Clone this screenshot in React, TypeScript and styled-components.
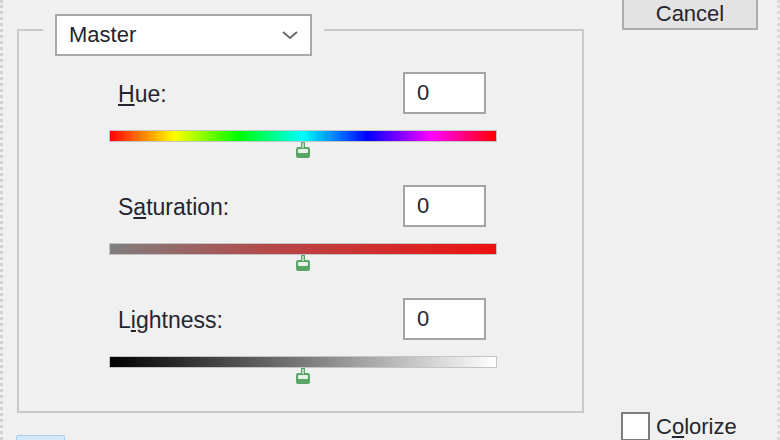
import styled, { createGlobalStyle } from "styled-components";

const GlobalStyle = createGlobalStyle`
  html, body {
    margin: 0;
    padding: 0;
    background: #f0f0f0;
    overflow: hidden;
  }
  body {
    font-family: "Liberation Sans", Arial, sans-serif;
  }
`;

const Frame = styled.div`
  width: 780px;
  height: 440px;
  box-sizing: border-box;
  display: flex;
  background: #f0f0f0;
  border-left: 3px dotted #d2d2d2;
  border-right: 3px dotted #dadada;
  overflow: hidden;
  color: #25252f;
`;

const LeftColumn = styled.div`
  display: flex;
  flex-direction: column;
  flex-shrink: 0;
`;

const GroupBox = styled.div`
  flex-shrink: 0;
  margin-top: 29px;
  margin-left: 14px;
  width: 567px;
  height: 384px;
  box-sizing: border-box;
  border: 2px solid #c9c9c9;
  display: flex;
  flex-direction: column;
`;

const LegendWrap = styled.div`
  align-self: flex-start;
  margin-top: -17px;
  margin-left: 24px;
  padding: 0 12px;
  background: #f0f0f0;
`;

const Dropdown = styled.div`
  width: 257px;
  height: 42px;
  box-sizing: border-box;
  border: 2px solid #a9a9a9;
  background: #fff;
  display: flex;
  align-items: center;
  justify-content: space-between;
  padding: 0 12px 0 12px;
  font-size: 22px;
`;

const Controls = styled.div`
  margin-left: 90px;
  margin-top: 16px;
  width: 388px;
  display: flex;
  flex-direction: column;
  gap: 26px;
`;

const Section = styled.div`
  display: flex;
  flex-direction: column;
`;

const Header = styled.div`
  height: 42px;
  display: flex;
  align-items: center;
  justify-content: space-between;
`;

const Label = styled.span`
  padding-left: 9px;
  font-size: 23px;
  margin-top: 3px;
`;

const ValueBox = styled.div`
  width: 83px;
  height: 42px;
  margin-right: 11px;
  box-sizing: border-box;
  border: 2px solid #a4a4a4;
  background: #fff;
  display: flex;
  align-items: center;
  padding-left: 12px;
  font-size: 22px;
`;

const Bar = styled.div<{ $fill: string }>`
  margin-top: 16px;
  height: 12px;
  box-sizing: border-box;
  border: 1px solid #c4c4c4;
  background: ${(p) => p.$fill};
`;

const ThumbTrack = styled.div`
  position: relative;
  height: 17px;
`;

const ThumbIcon = styled.svg<{ $pos: number }>`
  position: absolute;
  top: 0;
  left: ${(p) => p.$pos}%;
  transform: translateX(-50%);
`;

const HelpStub = styled.div`
  flex-shrink: 0;
  margin-top: 22px;
  margin-left: 13px;
  width: 49px;
  height: 12px;
  box-sizing: border-box;
  background: #d3e8f8;
  border: 1px solid #a6cfee;
  border-radius: 2px;
`;

const RightColumn = styled.div`
  margin-left: 38px;
  width: 136px;
  height: 440px;
  display: flex;
  flex-direction: column;
  justify-content: space-between;
`;

const Button = styled.div`
  margin-top: -10px;
  height: 40px;
  box-sizing: border-box;
  border: 2px solid #adadad;
  background: #e3e3e3;
  display: flex;
  align-items: flex-end;
  justify-content: center;
  padding-bottom: 1px;
  font-size: 22px;
`;

const CheckRow = styled.div`
  display: flex;
  align-items: center;
  gap: 6px;
  margin-left: -1px;
  margin-bottom: -1px;
  height: 29px;
  font-size: 22px;
`;

const CheckBox = styled.div`
  width: 29px;
  height: 29px;
  box-sizing: border-box;
  border: 2px solid #7d7d7d;
  background: #fff;
`;

const HUE =
  "linear-gradient(to right, #f00 0%, #ff0 16.7%, #0f0 33.3%, #0ff 50%, #00f 66.7%, #f0f 83.3%, #f00 100%)";
const SAT = "linear-gradient(to right, #7f7f7f 0%, #b44a4a 40%, #ee1010 100%)";
const LIGHT = "linear-gradient(to right, #000 0%, #7a7a7a 50%, #fff 100%)";

function Thumb({ pos }: { pos: number }) {
  return (
    <ThumbIcon $pos={pos} width="16" height="17" viewBox="0 0 16 17">
      <path
        d="M6 0 H10 V5 H13 Q15 5 15 8 V14 Q15 16 13 16 H3 Q1 16 1 14 V8 Q1 5 3 5 H6 Z"
        fill="#5aa565"
      />
      <rect x="7" y="1" width="2" height="5" fill="#b9d6bb" />
      <rect x="3" y="7" width="10" height="4" rx="1" fill="#e8f3e8" />
    </ThumbIcon>
  );
}

const sliders = [
  { label: "Hue:", fill: HUE },
  { label: "Saturation:", fill: SAT },
  { label: "Lightness:", fill: LIGHT },
];

function SliderLabel({ index }: { index: number }) {
  if (index === 0)
    return (
      <Label>
        <u>H</u>ue:
      </Label>
    );
  if (index === 1)
    return (
      <Label>
        S<u>a</u>turation:
      </Label>
    );
  return (
    <Label>
      L<u>i</u>ghtness:
    </Label>
  );
}

export default function App() {
  return (
    <>
      <GlobalStyle />
      <Frame>
        <LeftColumn>
          <GroupBox>
            <LegendWrap>
              <Dropdown>
                <span>Master</span>
                <svg width="16" height="10" viewBox="0 0 16 10">
                  <polyline
                    points="1,2 8,8 15,2"
                    fill="none"
                    stroke="#6a6a6a"
                    strokeWidth="2"
                  />
                </svg>
              </Dropdown>
            </LegendWrap>
            <Controls>
              {sliders.map((s, i) => (
                <Section key={s.label}>
                  <Header>
                    <SliderLabel index={i} />
                    <ValueBox>0</ValueBox>
                  </Header>
                  <Bar $fill={s.fill} />
                  <ThumbTrack>
                    <Thumb pos={50} />
                  </ThumbTrack>
                </Section>
              ))}
            </Controls>
          </GroupBox>
          <HelpStub />
        </LeftColumn>
        <RightColumn>
          <Button>Cancel</Button>
          <CheckRow>
            <CheckBox />
            <span>
              C<u>o</u>lorize
            </span>
          </CheckRow>
        </RightColumn>
      </Frame>
    </>
  );
}
